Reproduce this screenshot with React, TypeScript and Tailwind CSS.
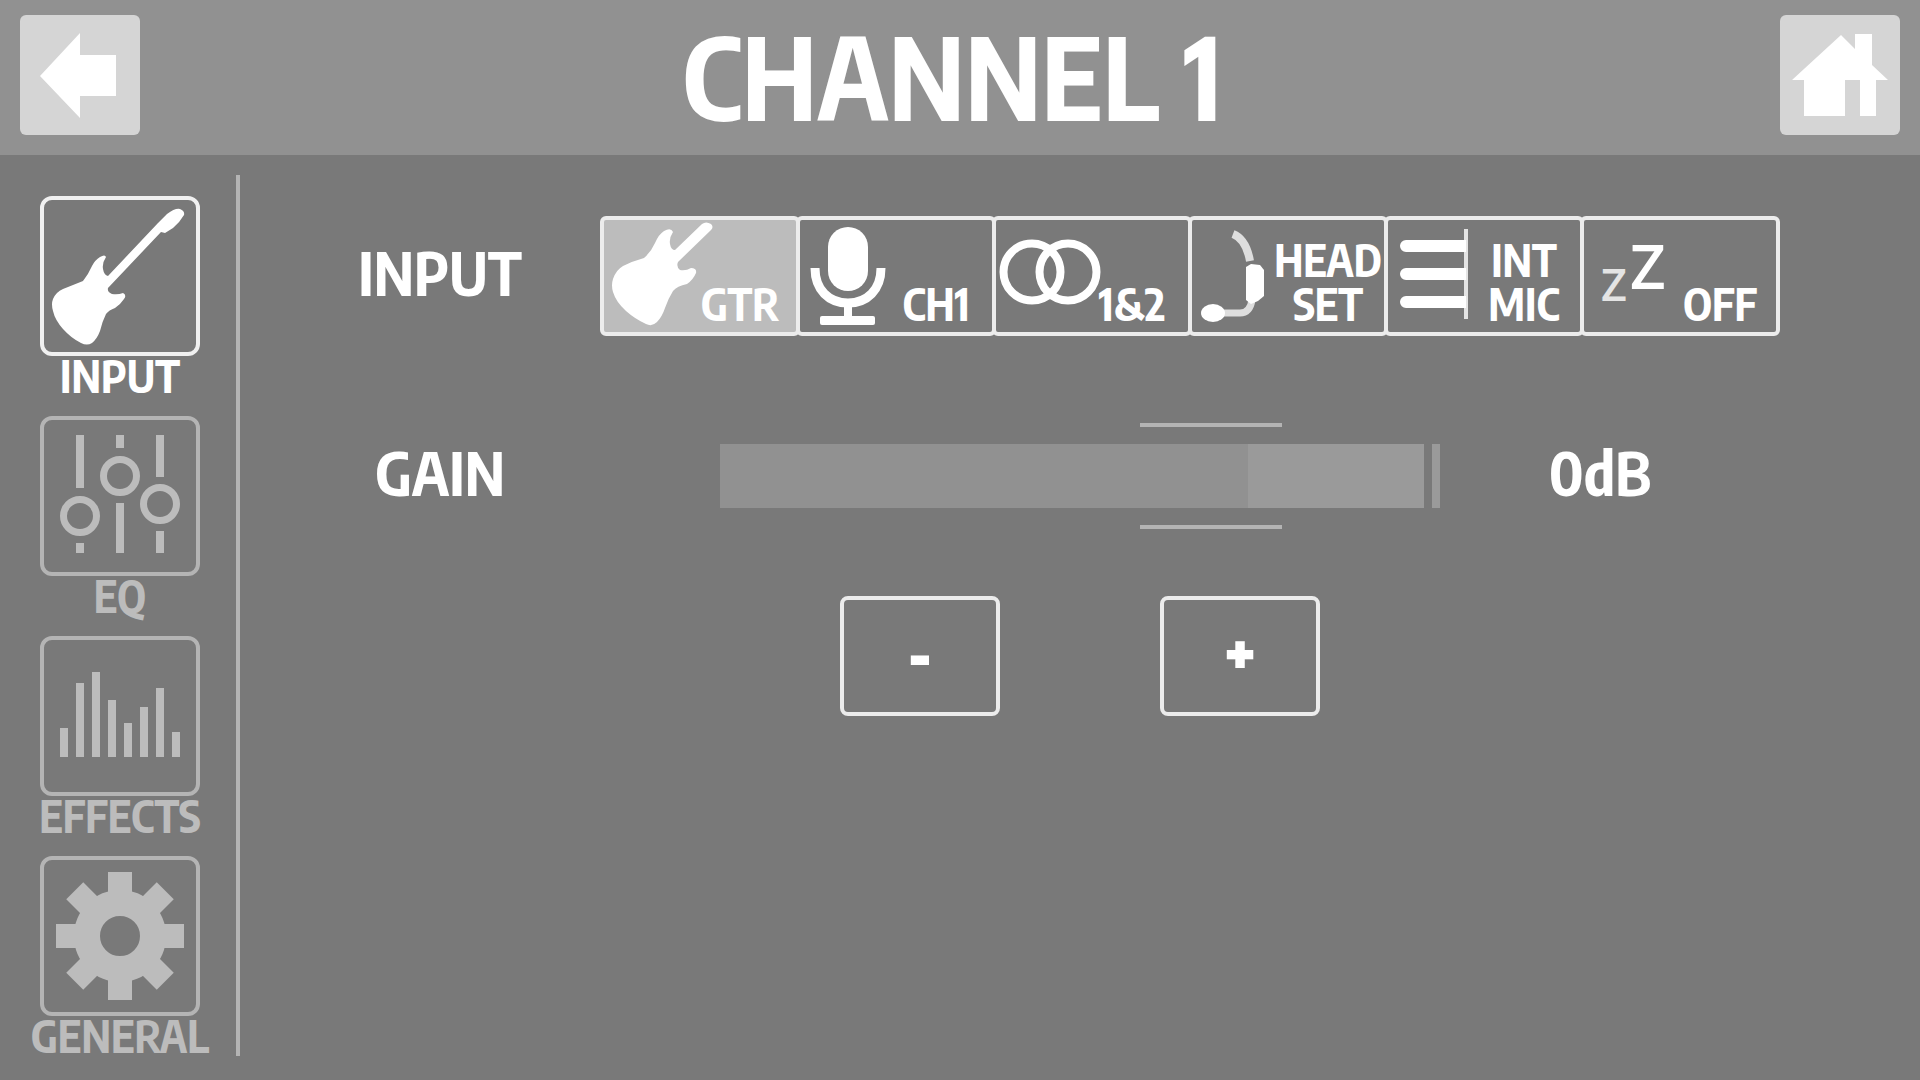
import { useState, type ReactNode } from "react";
import clsx from "clsx";

type Item = {
  id: string;
  label: string;
  icon: ReactNode;
};

const tabs: Item[] = [
  {
    id: "input",
    label: "INPUT",
    icon: (
      <path d="M114 23L123 14Q131 8 136 9Q141 11 140 15Q136 22 129 28L121 33L117 32L64 88Q63 92 68 94Q74 95 79 93Q83 95 80 99Q76 105 71 108Q65 110 62 114Q58 122 56 131Q53 139 48 143Q43 146 37 143Q27 138 19 129Q11 120 9 111Q7 104 9 99Q12 92 19 89Q29 85 39 81Q44 75 48 66Q51 60 56 57Q61 54 62 57Q58 63 59 69Q60 75 64 76Z" />
    ),
  },
  {
    id: "eq",
    label: "EQ",
    icon: (
      <>
        <g fill="none" stroke="currentColor" strokeWidth="7">
          <circle cx="36" cy="96" r="16.5" />
          <circle cx="76" cy="56" r="16.5" />
          <circle cx="116" cy="84" r="16.5" />
        </g>
        <path d="M32 15h8v53h-8zM32 123h8v10h-8zM72 15h8v13h-8zM72 83h8v50h-8zM112 15h8v42h-8zM112 111h8v22h-8z" />
      </>
    ),
  },
  {
    id: "effects",
    label: "EFFECTS",
    icon: (
      <path d="M16 88h8v29h-8zM32 43h8v74h-8zM48 32h8v85h-8zM64 60h8v57h-8zM80 83h8v34h-8zM96 67h8v50h-8zM112 48h8v69h-8zM128 92h8v25h-8z" />
    ),
  },
  {
    id: "general",
    label: "GENERAL",
    icon: (
      <g transform="translate(76 76)">
        <circle r="33" fill="none" stroke="currentColor" strokeWidth="26" />
        {[0, 45, 90, 135, 180, 225, 270, 315].map((angle) => (
          <rect key={angle} x="-12" y="-64" width="24" height="24" transform={`rotate(${angle})`} />
        ))}
      </g>
    ),
  },
];

const sources: Item[] = [
  {
    id: "gtr",
    label: "GTR",
    icon: (
      <path d="M71 30L98 4Q102 1 107 4Q110 7 107 10L74 42Q72 47 76 50Q82 51 87 48Q93 48 92 53Q89 60 83 64Q73 66 69 71Q64 79 61 88Q58 97 53 102Q48 107 42 104Q31 99 22 91Q12 82 9 72Q7 65 9 59Q12 50 19 46Q29 41 40 38Q47 32 51 23Q55 14 60 11Q67 7 69 12Q65 18 66 24Q67 30 71 30Z" />
    ),
  },
  {
    id: "ch1",
    label: "CH1",
    icon: (
      <>
        <rect x="28" y="7" width="40" height="64" rx="20" />
        <path
          d="M15 48C15 70 29 83 48 83S81 70 81 48"
          fill="none"
          stroke="currentColor"
          strokeWidth="9"
        />
        <path d="M44 83h8v13h-8z" />
        <rect x="20" y="96" width="55" height="9" rx="2" />
      </>
    ),
  },
  {
    id: "both",
    label: "1&2",
    icon: (
      <g fill="none" stroke="currentColor" strokeWidth="8">
        <circle cx="36" cy="52" r="28.5" />
        <circle cx="72" cy="52" r="28.5" />
      </g>
    ),
  },
  {
    id: "headset",
    label: "HEAD SET",
    icon: (
      <>
        <g fill="none" stroke="#dedede" strokeWidth="7">
          <path d="M41 14Q54 19 58 41" strokeWidth="8" />
          <path d="M60 80Q58 93 48 93H28" />
        </g>
        <path d="M54 47L59 44L68 45L72 50V76L66 81L59 84L54 80Z" />
        <ellipse cx="21" cy="93" rx="12" ry="9" />
      </>
    ),
  },
  {
    id: "intmic",
    label: "INT MIC",
    icon: (
      <>
        <path d="M76 9h4v90h-4z" fill="#e4e4e4" />
        <path d="M78 20v12H18a6 6 0 0 1 0-12zM78 48v12H18a6 6 0 0 1 0-12zM78 76v12H18a6 6 0 0 1 0-12z" />
      </>
    ),
  },
  {
    id: "off",
    label: "OFF",
    icon: (
      <g className="font-['Open_Sans'] font-semibold">
        <text x="17" y="81" fontSize="45" fill="#e4e4e4">
          Z
        </text>
        <text x="46" y="69" fontSize="62">
          Z
        </text>
      </g>
    ),
  },
];

function HeaderButton({ label, children }: { label: string; children: ReactNode }) {
  return (
    <button
      type="button"
      aria-label={label}
      className="size-[120px] shrink-0 rounded-md bg-[#d5d5d5] text-white"
    >
      <svg viewBox="0 0 120 120" fill="currentColor" aria-hidden="true">
        {children}
      </svg>
    </button>
  );
}

function TabButton({ item, active, onClick }: { item: Item; active: boolean; onClick: () => void }) {
  return (
    <button
      type="button"
      aria-pressed={active}
      onClick={onClick}
      className={clsx("flex flex-col items-center", active ? "text-white" : "text-[#bcbcbc]")}
    >
      <span
        className={clsx(
          "size-40 rounded-xl border-4",
          active ? "border-[#f0f0f0]" : "border-[#b4b4b4]",
        )}
      >
        <svg viewBox="0 0 152 152" fill="currentColor" aria-hidden="true">
          {item.icon}
        </svg>
      </span>
      <span className="text-[44px] leading-10">{item.label}</span>
    </button>
  );
}

function SourceButton({ item, active, onClick }: { item: Item; active: boolean; onClick: () => void }) {
  return (
    <button
      type="button"
      aria-pressed={active}
      onClick={onClick}
      className={clsx(
        "-ml-1 flex min-w-0 flex-1 items-end rounded-md border-4 border-[#ececec] first:ml-0",
        active && "bg-[#bcbcbc]",
      )}
    >
      <svg viewBox="0 0 112 112" fill="currentColor" aria-hidden="true" className="size-28 shrink-0">
        {item.icon}
      </svg>
      <span className="-ml-8 flex flex-1 flex-col items-center pb-1.5 text-[44px] leading-[44px]">
        {item.label.split(" ").map((line) => (
          <span key={line}>{line}</span>
        ))}
      </span>
    </button>
  );
}

function StepButton({ label, sign, onClick }: { label: string; sign: string; onClick: () => void }) {
  return (
    <button
      type="button"
      aria-label={label}
      onClick={onClick}
      className="h-[120px] w-40 rounded-lg border-4 border-[#ececec] pb-1 text-[60px] leading-[60px] font-black"
    >
      {sign}
    </button>
  );
}

export default function App() {
  const [tab, setTab] = useState("input");
  const [source, setSource] = useState("gtr");
  const [gain, setGain] = useState(0);

  return (
    <div className="flex min-h-screen flex-col bg-[#797979] font-['Encode_Sans_Condensed','Open_Sans_Condensed','Open_Sans',sans-serif] font-bold text-white">
      <header className="flex items-center justify-between bg-[#919191] px-5 pt-[15px] pb-5">
        <HeaderButton label="Back">
          <path d="M20 61L60 18V40H96V81H60V103Z" />
        </HeaderButton>
        <h1 className="pr-4 text-[114px] leading-[120px]">CHANNEL 1</h1>
        <HeaderButton label="Home">
          <path d="M12 65L61 20L75 34V19H92V50L108 65H96V101H80V65H65V101H24V65Z" />
        </HeaderButton>
      </header>

      <div className="flex flex-1 pt-5 pb-6">
        <nav className="flex w-[236px] shrink-0 flex-col gap-5 pt-[21px] pl-1">
          {tabs.map((item) => (
            <TabButton
              key={item.id}
              item={item}
              active={item.id === tab}
              onClick={() => setTab(item.id)}
            />
          ))}
        </nav>
        <div className="w-1 shrink-0 bg-[#b4b4b4]" />

        <main className="flex-1 pt-[41px] pr-[140px] pl-10">
          <section className="flex items-center">
            <h2 className="w-80 shrink-0 pb-2 text-center text-[60px] leading-[60px]">INPUT</h2>
            <div className="flex h-[120px] flex-1">
              {sources.map((item) => (
                <SourceButton
                  key={item.id}
                  item={item}
                  active={item.id === source}
                  onClick={() => setSource(item.id)}
                />
              ))}
            </div>
          </section>

          <section className="mt-[87px] grid grid-cols-[320px_120px_1fr_320px] items-center gap-y-[67px] pr-5">
            <label htmlFor="gain" className="pb-2 text-center text-[60px] leading-[60px]">
              GAIN
            </label>
            <div className="col-start-3 grid items-center">
              <div className="col-start-1 row-start-1 flex h-16 gap-2">
                <div className="flex flex-1">
                  <div className="w-3/4 bg-[#919191]" />
                  <div className="flex-1 bg-[#9a9a9a]" />
                </div>
                <div className="w-2 bg-[#9a9a9a]" />
              </div>
              {/* the thumb is only the two lines above and below the bar */}
              <input
                id="gain"
                type="range"
                min={-40}
                max={15}
                value={gain}
                onChange={(e) => setGain(Number(e.target.value))}
                className="col-start-1 row-start-1 h-[106px] w-full appearance-none bg-transparent [&::-webkit-slider-thumb]:h-[106px] [&::-webkit-slider-thumb]:w-[142px] [&::-webkit-slider-thumb]:appearance-none [&::-webkit-slider-thumb]:border-y-4 [&::-webkit-slider-thumb]:border-[#b4b4b4]"
              />
            </div>
            <output htmlFor="gain" className="pb-2 text-center text-[60px] leading-[60px]">
              {gain}dB
            </output>
            <div className="col-start-3 flex justify-center gap-40">
              <StepButton label="Decrease gain" sign="-" onClick={() => setGain(Math.max(-40, gain - 1))} />
              <StepButton label="Increase gain" sign="+" onClick={() => setGain(Math.min(15, gain + 1))} />
            </div>
          </section>
        </main>
      </div>
    </div>
  );
}
